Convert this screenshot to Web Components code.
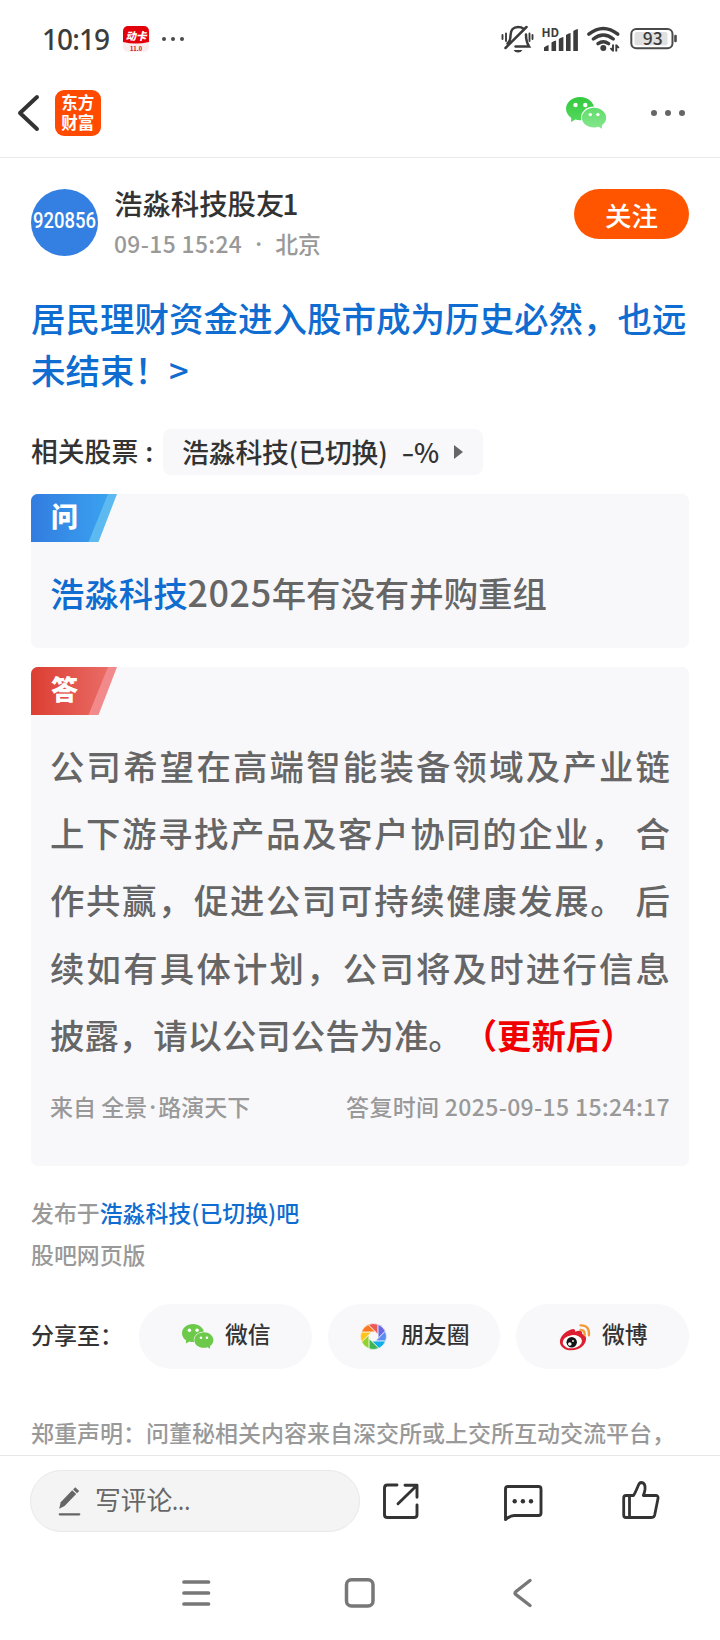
<!DOCTYPE html>
<html lang="zh-CN">
<head>
<meta charset="utf-8">
<title>浩淼科技股友1</title>
<style>
body{margin:0;background:#fff;font-family:"Noto Sans CJK SC",sans-serif;font-weight:500;text-spacing-trim:space-all}
</style>
</head>
<body>
<post-page></post-page>
<script>
const define=(name,css,html)=>customElements.define(name,class extends HTMLElement{
  constructor(){
    super();
    const t=document.createElement('template');
    t.innerHTML=`<style>*{box-sizing:border-box}svg{display:block;flex:none;overflow:visible}${css}</style>${typeof html==='function'?html(this):html}`;
    this.attachShadow({mode:'open'}).append(t.content.cloneNode(true));
  }
});

/* Icons: each viewBox also gives the drawn size in pixels. */
const wechat=(a,b)=>`<path fill="${a}" d="M14 0C6.200 0 0 5.200 0 11.800c0 3.700 2 6.900 5.200 9.100L5 25l4.400-2.500c1.500.4 3 .7 4.600.7 7.800 0 14.200-5.100 14.200-11.500S21.800 0 14 0z"/><ellipse cx="28" cy="20.500" rx="13" ry="11" fill="var(--cut,#fff)"/><path fill="${b}" d="M28 10.700c6.700 0 12.200 4.500 12.200 10 0 3.100-1.700 5.700-4.300 7.600l.1 3.400-3.500-2c-1.400.5-2.900.8-4.500.8-6.700 0-12.200-4.400-12.200-9.800s5.500-10 12.200-10z"/><g fill="#fff"><circle cx="9.500" cy="8" r="2.200"/><circle cx="19.300" cy="8" r="2.200"/><circle cx="24.300" cy="17.600" r="1.700"/><circle cx="31.900" cy="17.600" r="1.700"/></g>`;
const blades=['#ea5c58','#6b67e4','#5a8cf2','#12aeea','#3cb552','#93d22d','#fdc41b','#fd7a20'];
const ICONS={
  back:['17 94 24 38','<path d="M37 97 20 113 37 129" fill="none" stroke="#333" stroke-width="4" stroke-linecap="round" stroke-linejoin="round"/>'],
  mute:['501 24 34 30','<g fill="none" stroke="#3c3c3c" stroke-width="2.500" stroke-linecap="round"><path d="M507.500 43.500Q510.500 41 510.500 35.500C510.500 30 513.500 27 518 27Q521.500 27 523.500 28.800M526 34.500C526 39.500 526.500 42.500 529 46.500H515.500M505.500 48 526.500 27"/><path d="M502.500 35v4M506 33.500v7.500M529.500 33.500v7.500M532.500 35v4" stroke-width="1.900"/></g><path d="M513.500 50h9q-1.500 2.500-4.500 2.500t-4.500-2.500z" fill="#3c3c3c"/>'],
  signal:['541 24 38 28','<text x="541.500" y="36" font-family="Noto Sans,sans-serif" font-weight="600" font-size="12" fill="#3c3c3c">HD</text><g fill="#3c3c3c"><path d="M544 50v-3.500q2-2 4.600-2.500v6zM551.500 50v-8.500q2-1.500 4.600-2v10.500zM558.800 50V38q2-1.500 4.600-2v14zM566 50V34q2-1.500 4.600-2v18zM573.300 50V30q2-1.500 4.600-2v22z"/></g>'],
  wifi:['586 24 35 30','<g fill="none" stroke="#3c3c3c" stroke-linecap="round" stroke-width="3.400"><path d="M588.800 34.200Q603.300 22.600 617.800 34.200" /><path d="M593.300 39Q603.300 31 613.300 39" /><path d="M598 43.700Q603.300 39.700 608.600 43.700" /></g><circle cx="603.300" cy="48" r="3" fill="#3c3c3c"/><path d="M613 51.500v-7M613 51l-2.500-3M616.300 51.500v-7M616.300 45l2.500 3" stroke="#3c3c3c" stroke-width="1.900" fill="none"/>'],
  battery:['630 26 48 26','<rect x="631.300" y="29" width="41.200" height="19.200" rx="5" fill="#fff" stroke="#4a4a4a" stroke-width="2"/><rect x="634.500" y="32" width="33" height="13.300" rx="2" fill="#e0e0e0"/><path d="M675.500 36v5" stroke="#4a4a4a" stroke-width="2.600" stroke-linecap="round"/><text x="652.700" y="45" text-anchor="middle" font-family="Noto Sans,sans-serif" font-weight="500" font-size="17.500" fill="#3c3c3c">93</text>'],
  card:['122 25 28 28','<defs><clipPath id="c"><rect x="123" y="26" width="26" height="26" rx="5"/></clipPath></defs><g clip-path="url(#c)"><path fill="#f8eeee" d="M123 26h26v26h-26z"/><path fill="#e2000b" d="M123 26h26v16q-13 3-26 0z"/></g><text x="136" y="39.800" text-anchor="middle" font-size="10.500" font-weight="900" font-style="italic" fill="#fff">动卡</text><text x="136" y="50.500" text-anchor="middle" font-family="Roboto,sans-serif" font-size="5.500" font-weight="900" fill="#d8232a">11.0</text>'],
  logo:['54 89 48 48','<rect x="55" y="90" width="46" height="46" rx="9" fill="#ff4a00"/><g fill="#fff" font-weight="700" font-size="16.500" text-anchor="middle"><text x="77.700" y="109.300">东方</text><text x="77.700" y="128.600">财富</text></g>'],
  wechatBig:['0 0 41 32','<defs><linearGradient id="a" x2="0" y2="1"><stop stop-color="#34c93f"/><stop offset="1" stop-color="#55d95d"/></linearGradient><linearGradient id="b" x2="0" y2="1"><stop stop-color="#62dc6c"/><stop offset="1" stop-color="#85e68d"/></linearGradient></defs>'+wechat('url(#a)','url(#b)')],
  wechat:['0 0 41 32',wechat('#6cc94a','#6cc94a'),32,25],
  moments:['-13.500 -13.500 27 27',blades.map((c,i)=>`<path transform="rotate(${45*i})" d="M4.600-1.900V-12.200A13 13 0 0 0-5.400-11.800z" fill="${c}" stroke="#f8f8fb" stroke-width=".7"/>`).join('')],
  weibo:['559 1321 32 28','<path fill="#dd1f30" d="M571 1327.500c2.500-1.200 4.500-.5 4.200 2.200 3.500-1.600 7.700-1.500 7 2.300 2.300.6 3.900 2.300 3.900 4.600 0 6.200-6.500 11.700-14.500 11.700-7.200 0-11.700-3.800-11.700-8.600 0-4.700 5-10.200 11.100-12.200z"/><ellipse cx="572.300" cy="1339.700" rx="9.700" ry="6.600" fill="#fff" transform="rotate(-7 572.300 1339.700)"/><circle cx="571.700" cy="1340.300" r="5.200" fill="#151515"/><circle cx="569.800" cy="1342" r="1.800" fill="#fff"/><circle cx="573" cy="1339" r=".9" fill="#fff"/><g fill="none" stroke="#f29a38" stroke-width="2.300" stroke-linecap="round"><path d="M580.500 1323.300q9-.5 8.500 10"/><path d="M580.500 1328q4.500-.3 4.200 5"/></g>'],
  pen:['58 1484 23 32','<path fill="#666" d="M59.200 1507.800l1.500-6.500 11.500-12 4 3.700-11.600 12z"/><path d="M75.200 1486.200l4 3.900-2.200 2.200-3.900-3.900z" fill="#666"/><path d="M59.800 1513.300h19.400" stroke="#666" stroke-width="2.300" stroke-linecap="round"/>'],
  share:['382 1481 38 39','<g fill="none" stroke="#333" stroke-width="2.900" stroke-linecap="round" stroke-linejoin="round"><path d="M397 1485h-9.500q-3 0-3 3v27q0 2.500 3 2.500h26.500q3 0 3-2.500v-10"/><path d="M405 1485.200h12v12M416.500 1485.800l-18.500 18"/></g>'],
  comment:['503 1483 40 40','<path fill="none" stroke="#333" stroke-width="2.900" stroke-linejoin="round" d="M505.500 1519.500v-30.500q0-2.500 2.500-2.500h30.500q2.500 0 2.500 2.500v24q0 2.500-2.500 2.500h-24q-4 0-9 4z"/><g fill="#333"><circle cx="514.700" cy="1501.200" r="2.200"/><circle cx="522.900" cy="1501.200" r="2.200"/><circle cx="531" cy="1501.200" r="2.200"/></g>'],
  like:['621 1480 40 40','<path fill="none" stroke="#333" stroke-width="2.800" stroke-linejoin="round" d="M629.500 1495.500v21.500M626 1495.500h7.500q1.500-2 5-10.500 1-2.500 3-2.500 4.200.5 3.500 7-.4 3-1.700 6h12.300q3 0 2.400 3l-3.300 16.500q-.6 2.500-3 2.500H626q-2.300 0-2.300-2.500v-17q0-2.500 2.300-2.500z"/>'],
  menu:['181 1578 30 30','<path d="M184 1582h24.500M184 1593h24.500M184 1604h24.500" stroke="#777" stroke-width="3.700" stroke-linecap="round"/>'],
  home:['344 1577 32 32','<rect x="346.500" y="1579.700" width="26.500" height="26.300" rx="5" fill="none" stroke="#777" stroke-width="3.500"/>'],
  prev:['511 1577 22 32','<path d="M530 1580.500 516 1591.500q-2 1.700 0 3.200L530 1605.500" fill="none" stroke="#777" stroke-width="3.400" stroke-linecap="round"/>']
};
define('ui-icon',':host{display:block;flex:none}text{font-family:"Noto Sans CJK SC",sans-serif}',el=>{
  const [vb,body,w,h]=ICONS[el.getAttribute('name')],v=vb.split(' ');
  return `<svg width="${w||v[2]}" height="${h||v[3]}" viewBox="${vb}">${body}</svg>`;
});
define('dot-row',':host{display:flex;gap:var(--gap)}i{width:var(--d);height:var(--d);border-radius:50%;background:var(--c)}','<i></i><i></i><i></i>');

define('status-bar',`:host{display:flex;height:78px;padding:0 42px 0 42px;align-items:center;color:#3c3c3c}
time{font:500 28px/40px "Noto Sans",sans-serif;letter-spacing:-.9px;width:80px;white-space:nowrap}
dot-row{--gap:5px;--d:4px;--c:#4a4a4a;margin-left:12px;flex:1}
.r{display:flex;align-items:center;gap:8px}`,
`<time>10:19</time><ui-icon name="card"></ui-icon><dot-row></dot-row><div class="r"><ui-icon name="mute" style="margin-right:-2px"></ui-icon><ui-icon name="signal" style="margin-right:-1px"></ui-icon><ui-icon name="wifi" style="margin-right:1px"></ui-icon><ui-icon name="battery"></ui-icon></div>`);

define('nav-header',`:host{display:flex;height:80px;padding:0 35px 10px 17px;align-items:center;border-bottom:1px solid #ebebeb}
.sp{flex:1}dot-row{--gap:8px;--d:6px;--c:#666;margin-left:44px}`,
`<ui-icon name="back"></ui-icon><ui-icon name="logo" style="margin-left:13px"></ui-icon><div class="sp"></div><ui-icon name="wechatBig"></ui-icon><dot-row></dot-row>`);

define('author-bar',`:host{display:flex;height:67px;margin-top:31px}
.av{width:67px;height:67px;border-radius:50%;background:#3480e2;color:#fff;display:flex;align-items:center;justify-content:center;font:500 22px/64px Roboto,sans-serif}
.av span{display:block;height:67px;transform:scaleX(.84)}
.t{margin-left:16px;flex:1;white-space:nowrap}
.n{font-size:28.400px;line-height:38px;color:#333;margin-top:-5px}
.m{font-size:22.800px;line-height:38px;color:#999;margin-top:3px}
button{all:unset;box-sizing:border-box;width:115px;height:50px;border-radius:25px;background:#ff5500;color:#fff;text-align:center;font-size:26.500px;line-height:49px}`,
`<div class="av"><span>920856</span></div><div class="t"><div class="n">浩淼科技股友<span style="margin-left:-2px">1</span></div><div class="m"><slot></slot></div></div><button>关注</button>`);

define('post-title',`:host{display:block;font-size:34.500px;line-height:52px;color:#0f6cd0;white-space:nowrap;margin-top:35px;height:104px}`,'<slot></slot>');

define('related-stocks',`:host{display:flex;height:46px;margin-top:34px;font-size:26.800px;line-height:44px;color:#333;white-space:nowrap}
.l{width:132px}.b{display:flex;align-items:center;width:320px;border-radius:8px;background:#f8f8fb;padding-left:20px}
.n{width:206px;margin-left:-1px;letter-spacing:-.1px}.p{margin-left:14px}.h{display:inline-block;transform:scaleX(1.35);width:12px;text-align:center}
.b i{border:solid transparent;border-width:7px 0 7px 9px;border-left-color:#666;margin-left:15px}`,
`<div class="l">相关股票<span style="margin-left:7px">:</span></div><div class="b"><span class="n">浩淼科技(已切换)</span><span class="p"><span class="h">-</span>%</span><i></i></div>`);

define('qa-card',`:host{display:block;background:#f8f8fb;border-radius:7px;padding:0 19px 0 20px;overflow:hidden;color:#666;font-size:34.400px}
.tag{position:relative;width:86px;height:48px;margin-left:-20px;padding-left:20px;color:#fff;font-size:27px;line-height:43px;font-weight:700;clip-path:polygon(0 0,100% 0,67.500px 100%,0 100%);background:var(--edge)}
.tag::before{content:"";position:absolute;inset:0;background:linear-gradient(90deg,var(--from),var(--to) 90%);clip-path:polygon(0 0,77px 0,57.500px 100%,0 100%)}
.tag b{position:relative}
:host([kind=q]){--from:#327ce0;--to:#3aa2f0;--edge:#5cbaf0}
:host([kind=a]){--from:#dc3e32;--to:#e96c66;--edge:#f28a8c}`,
el=>`<div class="tag"><b>${el.getAttribute('kind')==='q'?'问':'答'}</b></div><slot></slot>`);

define('answer-line',`:host{display:block;line-height:67.200px;height:67.200px;margin-left:-1px;text-align:justify;text-align-last:justify;white-space:nowrap}
:host([last]){text-align-last:left}`,'<slot></slot>');

define('source-row',`:host{display:flex;justify-content:space-between;font-size:23px;line-height:36px;color:#999;white-space:nowrap;margin-left:-1px}.r{letter-spacing:.33px}.c{font-family:"Noto Sans",sans-serif;font-weight:600;display:inline-block;width:11px;text-align:center}`,
`<span>来自 全景<span class="c">·</span>路演天下</span><span class="r">答复时间 2025-09-15 15:24:17</span>`);

define('share-pill',`:host{display:flex;width:172.500px;height:65px;border-radius:32.500px;background:#f8f8fb;--cut:#f8f8fb;align-items:center;justify-content:center;font-size:22.800px;line-height:60px;padding-left:2px;color:#333}span{margin-left:var(--g,11px);height:65px}`,
el=>`<ui-icon name="${el.getAttribute('icon')}"></ui-icon><span><slot></slot></span>`);
define('share-row',`:host{display:flex;height:65px;margin-top:29px;gap:16px;font-size:23px;line-height:61px;color:#333}.l{width:92px;white-space:nowrap}`,
`<span class="l">分享至：</span><share-pill icon="wechat">微信</share-pill><share-pill icon="moments" style="--g:14px">朋友圈</share-pill><share-pill icon="weibo">微博</share-pill>`);

define('comment-bar',`:host{display:flex;height:93px;border-top:1px solid #e8e8e8;padding:14px 59px 0 30px;align-items:flex-start;background:#fff}
.in{display:flex;align-items:center;width:330px;height:62px;border-radius:31px;background:#f4f4f4;border:1px solid #e9e9e9;padding-left:27px;color:#666;font-size:25.800px;font-weight:400;line-height:56px}
.in span{margin-left:14px;height:60px}.e{display:inline-block;transform:scaleX(.85);transform-origin:0 0;margin:0}ui-icon{margin-top:11px}.in ui-icon{margin-top:0}`,
`<div class="in"><ui-icon name="pen"></ui-icon><span>写评论<span class="e" style="margin:0">...</span></span></div><ui-icon name="share" style="margin-left:22px"></ui-icon><ui-icon name="comment" style="margin:13px 0 0 83px"></ui-icon><ui-icon name="like" style="margin:10px 0 0 78px"></ui-icon>`);
define('system-nav',`:host{display:flex;height:92px;padding:29px 0 0 181px;align-items:flex-start}`,
`<ui-icon name="menu" style="margin-top:1px"></ui-icon><ui-icon name="home" style="margin-left:133px"></ui-icon><ui-icon name="prev" style="margin-left:135px"></ui-icon>`);

define('post-page',`:host{display:block;width:720px;height:1640px;overflow:hidden;background:#fff}
main{height:1297px;padding:0 31px;overflow:hidden;display:flow-root}
.y{font-size:36px;letter-spacing:.5px;line-height:1}.k{color:#0f6cd0}.red{color:#f00000;font-weight:700}
.q{line-height:60px;height:106px;padding-top:20px;margin-left:-1px;font-size:34.400px;white-space:nowrap;box-sizing:border-box}
.pub{font-size:22.900px;line-height:42px;color:#999;margin-top:25px}
.dot{display:inline-block;width:33px;text-align:center;font-family:"Noto Sans",sans-serif;font-weight:600}
.dis{font-size:23px;line-height:36px;color:#999;margin-top:45px;white-space:nowrap}`,
`<status-bar></status-bar><nav-header></nav-header>
<main>
<author-bar><span style="letter-spacing:.38px">09-15 15:24</span><span class="dot">·</span>北京</author-bar>
<post-title>居民理财资金进入股市成为历史必然，也远<br>未结束！&gt;</post-title>
<related-stocks></related-stocks>
<qa-card kind="q" style="margin-top:19px"><div class="q"><span class="k">浩淼科技</span><span class="y">2025</span>年有没有并购重组</div></qa-card>
<qa-card kind="a" style="margin-top:19px;height:499px"><div style="height:17px"></div>
<answer-line>公司希望在高端智能装备领域及产业链</answer-line>
<answer-line>上下游寻找产品及客户协同的企业， 合</answer-line>
<answer-line>作共赢，促进公司可持续健康发展。 后</answer-line>
<answer-line>续如有具体计划，公司将及时进行信息</answer-line>
<answer-line last>披露，请以公司公告为准。<span class="red">（更新后）</span></answer-line>
<source-row style="margin-top:20px"></source-row></qa-card>
<div class="pub">发布于<span class="k">浩淼科技(已切换)吧</span><br>股吧网页版</div>
<share-row></share-row>
<div class="dis">郑重声明：问董秘相关内容来自深交所或上交所互动交流平台，</div>
</main>
<comment-bar></comment-bar><system-nav></system-nav>`);
</script>
</body>
</html>
